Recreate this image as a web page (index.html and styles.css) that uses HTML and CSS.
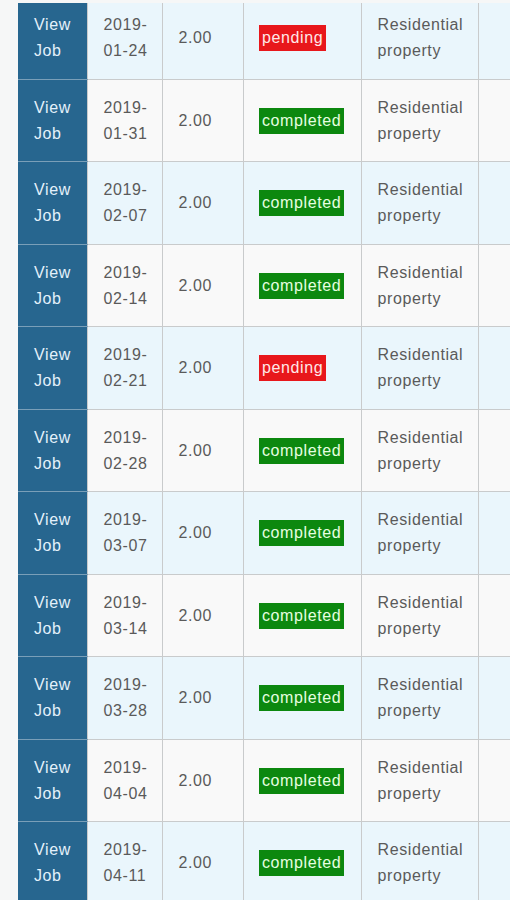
FILE: index.html
```html
<!DOCTYPE html>
<html>
<head>
<meta charset="utf-8">
<link rel="stylesheet" href="styles.css">
</head>
<body>
<div class="wrap">
<table class="jobs">
<colgroup>
<col class="c-view"><col class="c-date"><col class="c-hrs"><col class="c-status"><col class="c-type"><col class="c-more">
</colgroup>
<tbody>
<tr class="odd first"><td class="view">View Job</td><td class="date">2019-01-24</td><td>2.00</td><td class="status"><span class="badge pending">pending</span></td><td>Residential property</td><td></td></tr>
<tr class="even"><td class="view">View Job</td><td class="date">2019-01-31</td><td>2.00</td><td class="status"><span class="badge completed">completed</span></td><td>Residential property</td><td></td></tr>
<tr class="odd"><td class="view">View Job</td><td class="date">2019-02-07</td><td>2.00</td><td class="status"><span class="badge completed">completed</span></td><td>Residential property</td><td></td></tr>
<tr class="even"><td class="view">View Job</td><td class="date">2019-02-14</td><td>2.00</td><td class="status"><span class="badge completed">completed</span></td><td>Residential property</td><td></td></tr>
<tr class="odd"><td class="view">View Job</td><td class="date">2019-02-21</td><td>2.00</td><td class="status"><span class="badge pending">pending</span></td><td>Residential property</td><td></td></tr>
<tr class="even"><td class="view">View Job</td><td class="date">2019-02-28</td><td>2.00</td><td class="status"><span class="badge completed">completed</span></td><td>Residential property</td><td></td></tr>
<tr class="odd"><td class="view">View Job</td><td class="date">2019-03-07</td><td>2.00</td><td class="status"><span class="badge completed">completed</span></td><td>Residential property</td><td></td></tr>
<tr class="even"><td class="view">View Job</td><td class="date">2019-03-14</td><td>2.00</td><td class="status"><span class="badge completed">completed</span></td><td>Residential property</td><td></td></tr>
<tr class="odd"><td class="view">View Job</td><td class="date">2019-03-28</td><td>2.00</td><td class="status"><span class="badge completed">completed</span></td><td>Residential property</td><td></td></tr>
<tr class="even"><td class="view">View Job</td><td class="date">2019-04-04</td><td>2.00</td><td class="status"><span class="badge completed">completed</span></td><td>Residential property</td><td></td></tr>
<tr class="odd"><td class="view">View Job</td><td class="date">2019-04-11</td><td>2.00</td><td class="status"><span class="badge completed">completed</span></td><td>Residential property</td><td></td></tr>
</tbody>
</table>
</div>
</body>
</html>
```
FILE: styles.css
```css
html, body {
  margin: 0;
  padding: 0;
  background: #f6f7f7;
  overflow: hidden;
}
.wrap {
  margin: 3px 0 0 18px;
  width: 492px;
  overflow: hidden;
}
.jobs {
  border-collapse: collapse;
  table-layout: fixed;
  width: 580px;
  font-family: "Liberation Sans", Arial, sans-serif;
  font-size: 16px;
  letter-spacing: 0.6px;
  line-height: 26px;
  color: #5a5a5a;
}
.c-view { width: 69px; }
.c-date { width: 75px; }
.c-hrs { width: 81px; }
.c-status { width: 118px; }
.c-type { width: 117px; }
.c-more { width: 120px; }
.jobs td {
  border: 1px solid #c9cbcc;
  padding: 15px 10px 14.5px 16px;
  vertical-align: middle;
}
.jobs tr:first-child td { border-top: 0; }
.jobs td:first-child { border-left: 0; }
.jobs tr.first td {
  padding-top: 9px;
  padding-bottom: 14.5px;
}
.odd td { background: #eaf6fc; }
.even td { background: #f9f9f9; }
.jobs td.view {
  background: #27668f;
  color: #e4f1fb;
  border-color: #7a9fb8;
  border-right-color: #c9cbcc;
  padding-right: 4px;
}
.jobs td.date { padding-right: 4px; }
.jobs td.status { padding-left: 15px; padding-right: 4px; }
.badge {
  display: inline-block;
  padding: 0 3px 0 3.5px;
  line-height: 26px;
}
.badge.pending { background: #e8171b; color: #ffe8e8; }
.badge.completed { background: #0c880f; color: #e6ffe0; }
```
